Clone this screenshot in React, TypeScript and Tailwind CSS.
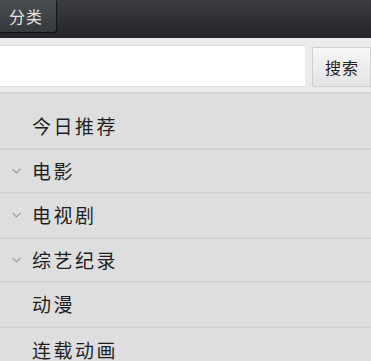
const items = [
  { name: '今日推荐', sub: false },
  { name: '电影', sub: true },
  { name: '电视剧', sub: true },
  { name: '综艺纪录', sub: true },
  { name: '动漫', sub: false },
  { name: '连载动画', sub: false },
];

export default function App() {
  return (
    <div
      className="w-[371px] h-[361px] overflow-hidden bg-[#dedede]"
      style={{ fontFamily: '"Noto Sans CJK SC", "Noto Sans", sans-serif' }}
    >
      {/* header */}
      <div className="h-[38px] bg-gradient-to-b from-[#3a3c41] to-[#24262a] flex items-start">
        <div className="w-[56px] h-[32px] rounded-br-[3px] bg-gradient-to-b from-[#4a4d52] to-[#35383c] shadow-[1px_1px_1px_rgba(0,0,0,0.6)] flex items-center pl-[9px] text-[16px] text-[#e4e4e4] tracking-[1px]">
          分类
        </div>
      </div>

      {/* search */}
      <div className="bg-[#ebebeb] pt-[7px] pb-[5px] flex items-end border-b border-[#d6d6d6]">
        <div className="w-[305px] h-[42px] bg-white border-y border-[#dcdcdc]" />
        <button className="ml-[7px] w-[59px] h-[40px] bg-gradient-to-b from-[#f7f7f7] to-[#e4e4e4] border border-[#cfcfcf] rounded-l-[2px] text-[16px] text-[#222] text-left pl-[12px] tracking-[1px]">
          搜索
        </button>
      </div>

      {/* list */}
      <div className="pt-[12px]">
        {items.map((it, i) => (
          <div
            key={i}
            className={`h-[44.5px] flex items-center ${i < items.length - 1 ? 'border-b-2 border-[#d3d3d3]' : ''}`}
          >
            <div className="w-[32px] flex justify-center pl-[1px]">
              {it.sub && (
                <svg width="9" height="6" viewBox="0 0 9 6" fill="none" stroke="#9a9a9a" strokeWidth="1.1">
                  <path d="M0.5 0.8 L4.5 5 L8.5 0.8" />
                </svg>
              )}
            </div>
            <span className="text-[19px] text-[#1e1e1e] tracking-[2.5px]">{it.name}</span>
          </div>
        ))}
      </div>
    </div>
  );
}
